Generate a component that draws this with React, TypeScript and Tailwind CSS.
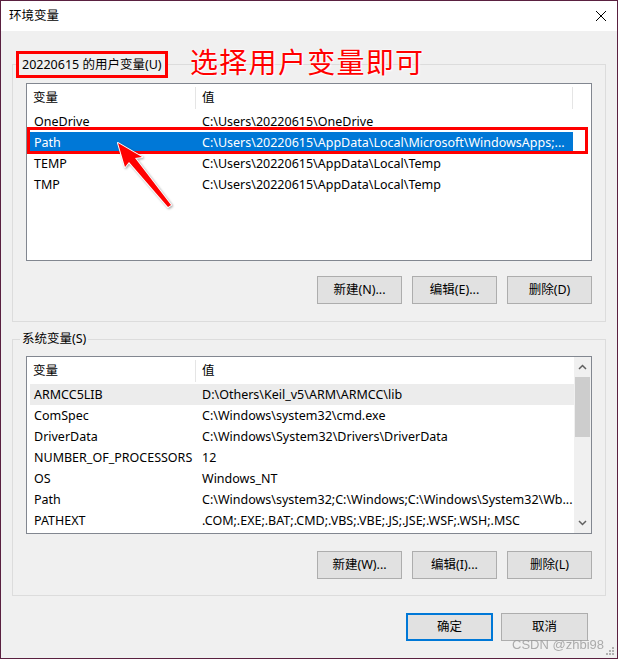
import { ReactNode } from 'react'

type Row = { name: string; value: string; state?: 'active' | 'inactive' }

const userRows: Row[] = [
  { name: 'OneDrive', value: 'C:\\Users\\20220615\\OneDrive' },
  { name: 'Path', value: 'C:\\Users\\20220615\\AppData\\Local\\Microsoft\\WindowsApps;...', state: 'active' },
  { name: 'TEMP', value: 'C:\\Users\\20220615\\AppData\\Local\\Temp' },
  { name: 'TMP', value: 'C:\\Users\\20220615\\AppData\\Local\\Temp' },
]

const systemRows: Row[] = [
  { name: 'ARMCC5LIB', value: 'D:\\Others\\Keil_v5\\ARM\\ARMCC\\lib', state: 'inactive' },
  { name: 'ComSpec', value: 'C:\\Windows\\system32\\cmd.exe' },
  { name: 'DriverData', value: 'C:\\Windows\\System32\\Drivers\\DriverData' },
  { name: 'NUMBER_OF_PROCESSORS', value: '12' },
  { name: 'OS', value: 'Windows_NT' },
  { name: 'Path', value: 'C:\\Windows\\system32;C:\\Windows;C:\\Windows\\System32\\Wb...' },
  { name: 'PATHEXT', value: '.COM;.EXE;.BAT;.CMD;.VBS;.VBE;.JS;.JSE;.WSF;.WSH;.MSC' },
]

function Button({ children, primary, wide }: { children: ReactNode; primary?: boolean; wide?: boolean }) {
  return (
    <div
      className={
        'h-[28px] flex items-center justify-center bg-[#e1e1e1] ' +
        (wide ? 'w-[87px] ' : 'w-[85px] ') +
        (primary ? 'border-2 border-[#0078d7]' : 'border border-[#adadad]')
      }
    >
      {children}
    </div>
  )
}

function VarList({ rows, scroll }: { rows: Row[]; scroll?: boolean }) {
  return (
    <div className="h-[178px] border border-[#828790] bg-white flex">
      <div className="flex-1 flex flex-col min-w-0">
        <div className="h-[27px] flex items-center shrink-0">
          <div className="w-[168px] pl-[6px]">变量</div>
          <div className="w-px h-[22px] bg-[#e5e5e5]" />
          <div className="flex-1 pl-[6px]">值</div>
          {!scroll && <div className="w-px h-[22px] bg-[#e5e5e5] mr-[18px]" />}
        </div>
        <div className={'flex flex-col pl-[3px] ' + (scroll ? 'pr-0' : 'pr-[18px]')}>
          {rows.map(r => (
            <div
              key={r.name}
              className={
                'h-[21px] flex items-center whitespace-nowrap ' +
                (r.state === 'active'
                  ? 'bg-[#0078d7] text-white'
                  : r.state === 'inactive'
                    ? 'bg-[#ececec]'
                    : '')
              }
            >
              <div className="w-[168px] pl-[4px] overflow-hidden">{r.name}</div>
              <div className="flex-1 pl-[4px] overflow-hidden">{r.value}</div>
            </div>
          ))}
        </div>
      </div>
      {scroll && (
        <div className="w-[17px] bg-[#f0f0f0] flex flex-col items-center">
          <div className="h-[20px] w-full flex items-center justify-center">
            <svg width="9" height="6" viewBox="0 0 9 6">
              <polyline points="1,5 4.5,1.5 8,5" fill="none" stroke="#606060" strokeWidth="1.5" />
            </svg>
          </div>
          <div className="w-[15px] h-[60px] bg-[#cdcdcd]" />
          <div className="flex-1" />
          <div className="h-[20px] w-full flex items-center justify-center">
            <svg width="9" height="6" viewBox="0 0 9 6">
              <polyline points="1,1 4.5,4.5 8,1" fill="none" stroke="#606060" strokeWidth="1.5" />
            </svg>
          </div>
        </div>
      )}
    </div>
  )
}

export default function App() {
  return (
    <div className="relative w-[618px] h-[659px] border border-[#5a2040] bg-[#f0f0f0] flex flex-col text-[12.5px] text-black font-['Noto_Sans','Noto_Sans_CJK_SC',sans-serif] leading-[16px] overflow-hidden">
      {/* title bar */}
      <div className="h-[30px] bg-white flex items-center justify-between pl-[8px] pr-[10px] shrink-0">
        <span>环境变量</span>
        <svg width="12" height="12" viewBox="0 0 12 12">
          <path d="M1 1 L11 11 M11 1 L1 11" stroke="#000" strokeWidth="1" />
        </svg>
      </div>

      <div className="px-[11px] flex flex-col">
        {/* user variables */}
        <fieldset className="mt-[20px] border border-[#dcdcdc]">
          <legend className="ml-[3px] border-[3px] border-[#ff0000] px-[3px] h-[27px] flex items-center">
            20220615 的用户变量(U)
          </legend>
          <div className="px-[13px] pt-[5px] pb-[17px] flex flex-col">
            <div className="relative">
              <VarList rows={userRows} />
              <div className="absolute left-px top-[44px] w-[561px] h-[27px] border-[3px] border-[#ff0000]" />
            </div>
            <div className="mt-[15px] flex justify-end gap-[10px]">
              <Button>新建(N)...</Button>
              <Button>编辑(E)...</Button>
              <Button>删除(D)</Button>
            </div>
          </div>
        </fieldset>

        {/* system variables */}
        <fieldset className="mt-[9px] border border-[#dcdcdc]">
          <legend className="ml-[7px] px-[2px]">系统变量(S)</legend>
          <div className="px-[13px] pt-[9px] pb-[16px] flex flex-col">
            <VarList rows={systemRows} scroll />
            <div className="mt-[17px] flex justify-end gap-[10px]">
              <Button>新建(W)...</Button>
              <Button>编辑(I)...</Button>
              <Button>删除(L)</Button>
            </div>
          </div>
        </fieldset>

        <div className="mt-[17px] flex justify-end gap-[8px] pr-[18px]">
          <Button primary wide>确定</Button>
          <Button wide>取消</Button>
        </div>
      </div>

      {/* annotation text */}
      <div className="absolute left-[189px] top-[42px] text-[28px] leading-[36px] tracking-[1.3px] text-[#ff0000] font-['Noto_Sans_CJK_SC',sans-serif] [text-shadow:0_0_2px_#fff,0_0_2px_#fff,1px_1px_2px_#fff]">
        选择用户变量即可
      </div>

      {/* annotation arrow */}
      <svg className="absolute left-0 top-0 pointer-events-none" width="618" height="659" viewBox="0 0 618 659">
        <polygon
          points="117,142 141,156 134,157 170,204 167,206 128,161 124,166"
          fill="#ff0000"
          stroke="#ffffff"
          strokeWidth="2"
          strokeLinejoin="round"
          paintOrder="stroke"
          style={{ filter: 'drop-shadow(1px 1px 1px rgba(0,0,0,0.35))' }}
        />
      </svg>

      {/* watermark */}
      <div className="absolute right-[13px] bottom-[6px] text-[13px] leading-[14px] text-[#9a9a9a] opacity-80 font-['Liberation_Sans',sans-serif]">
        CSDN @zhbi98
      </div>
      {/* resize grip */}
      <svg className="absolute right-[2px] bottom-[2px]" width="10" height="10" viewBox="0 0 10 10">
        <rect x="7" y="1" width="2" height="2" fill="#b0b0b0" />
        <rect x="4" y="4" width="2" height="2" fill="#b0b0b0" />
        <rect x="7" y="4" width="2" height="2" fill="#b0b0b0" />
        <rect x="1" y="7" width="2" height="2" fill="#b0b0b0" />
        <rect x="4" y="7" width="2" height="2" fill="#b0b0b0" />
        <rect x="7" y="7" width="2" height="2" fill="#b0b0b0" />
      </svg>
    </div>
  )
}
